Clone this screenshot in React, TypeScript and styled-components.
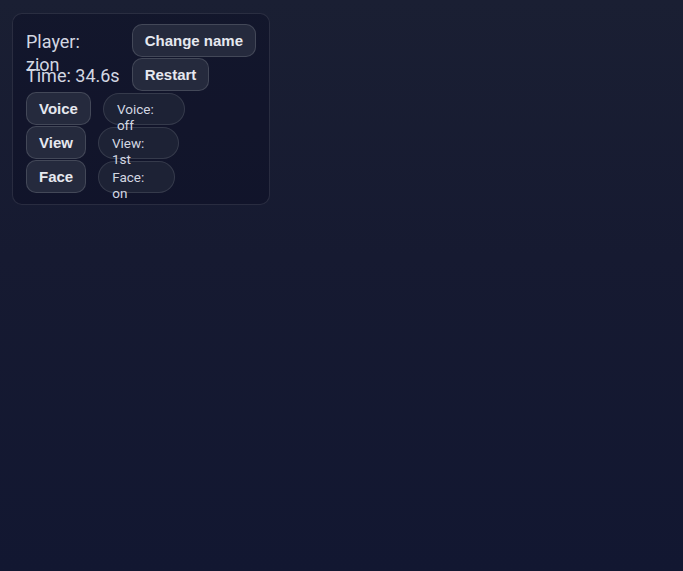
import styled, { createGlobalStyle } from "styled-components";

const GlobalStyle = createGlobalStyle`
  html, body {
    margin: 0;
    padding: 0;
    height: 100%;
  }
  body {
    background: linear-gradient(180deg, #1a1f33 0%, #161a31 45%, #121731 100%);
    font-family: Roboto, "Liberation Sans", sans-serif;
  }
  #root {
    min-height: 100vh;
  }
`;

const Page = styled.div`
  padding: 13px 0 0 12px;
`;

const Panel = styled.div`
  box-sizing: border-box;
  width: 258px;
  padding: 10px 13px 11px;
  border: 1px solid rgba(255, 255, 255, 0.1);
  border-radius: 10px;
  background: rgba(10, 14, 36, 0.45);
  display: flex;
  flex-direction: column;
  gap: 1px;
`;

const Row = styled.div`
  display: flex;
  align-items: center;
  gap: 12px;
  height: 33px;
`;

const Label = styled.div<{ $grow?: boolean }>`
  position: relative;
  z-index: 1;
  top: 1px;
  flex: ${(p) => (p.$grow ? "1 1 auto" : "0 0 auto")};
  height: 23px;
  line-height: 23px;
  font-size: 18px;
  color: #d3d7e2;
  white-space: nowrap;
`;

const Wrap = styled.span`
  display: inline-block;
  width: min-content;
  white-space: normal;
`;

const Button = styled.button`
  flex: 0 0 auto;
  box-sizing: border-box;
  height: 33px;
  padding: 0 12px;
  border: 1px solid rgba(255, 255, 255, 0.14);
  border-radius: 10px;
  background: #252a3d;
  color: #e6e8ef;
  font-family: "Liberation Sans", Arial, sans-serif;
  font-weight: bold;
  font-size: 15px;
  cursor: pointer;
`;

const Pill = styled.div<{ $width: number }>`
  box-sizing: border-box;
  width: ${(p) => p.$width}px;
  height: 32px;
  padding: 0 13px;
  border: 1px solid rgba(255, 255, 255, 0.11);
  border-radius: 16px;
  background: #1d2235;
  display: flex;
  align-items: center;
`;

const PillText = styled.span`
  position: relative;
  z-index: 1;
  display: block;
  width: min-content;
  height: 16px;
  line-height: 16px;
  font-size: 13.5px;
  color: #d3d7e2;
`;

const toggles = [
  { name: "Voice", status: "Voice: off", width: 82 },
  { name: "View", status: "View: 1st", width: 81 },
  { name: "Face", status: "Face: on", width: 77 },
];

export default function App() {
  return (
    <>
      <GlobalStyle />
      <Page>
        <Panel>
          <Row>
            <Label $grow>
              <Wrap>Player: zion</Wrap>
            </Label>
            <Button>Change name</Button>
          </Row>
          <Row>
            <Label>Time: 34.6s</Label>
            <Button>Restart</Button>
          </Row>
          {toggles.map((t) => (
            <Row key={t.name}>
              <Button>{t.name}</Button>
              <Pill $width={t.width}>
                <PillText>{t.status}</PillText>
              </Pill>
            </Row>
          ))}
        </Panel>
      </Page>
    </>
  );
}
